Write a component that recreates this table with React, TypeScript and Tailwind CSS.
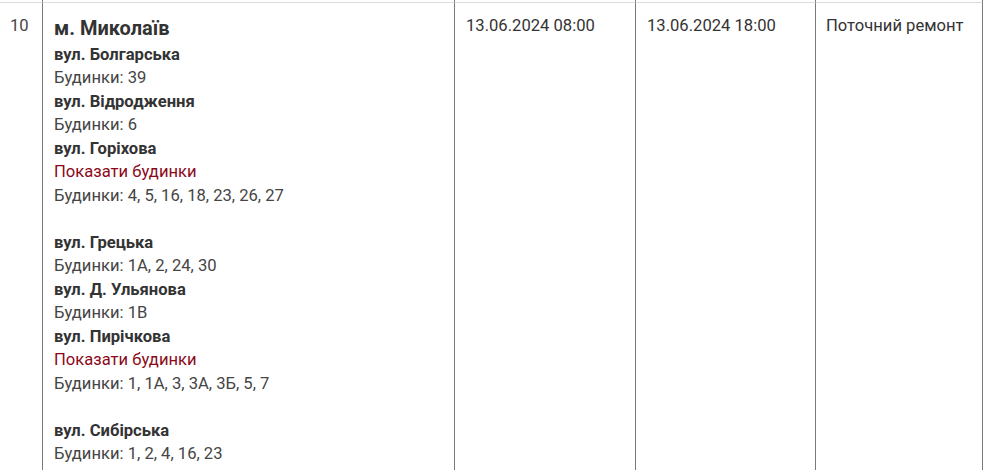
const streets = [
  { name: 'вул. Болгарська', houses: '39' },
  { name: 'вул. Відродження', houses: '6' },
  { name: 'вул. Горіхова', houses: '4, 5, 16, 18, 23, 26, 27', toggle: true },
  { name: 'вул. Грецька', houses: '1А, 2, 24, 30' },
  { name: 'вул. Д. Ульянова', houses: '1В' },
  { name: 'вул. Пирічкова', houses: '1, 1А, 3, 3А, 3Б, 5, 7', toggle: true },
  { name: 'вул. Сибірська', houses: '1, 2, 4, 16, 23' },
];

const cell = 'border-r border-[#7a7a7a] border-t border-t-[#dcdcdc] px-[11px] pt-[11px]';

export default function App() {
  return (
    <div className="min-h-screen bg-white font-['Roboto','Liberation_Sans',sans-serif] text-[16.6px] leading-[23.5px] text-[#454545]">
      <div className="grid grid-cols-[43px_412px_181px_180px_167px]">
        <div className="h-[2px] border-r border-[#7a7a7a]" />
        <div className="h-[2px] border-r border-[#7a7a7a]" />
        <div className="h-[2px] border-r border-[#7a7a7a]" />
        <div className="h-[2px] border-r border-[#7a7a7a]" />
        <div className="h-[2px] border-r border-[#7a7a7a]" />

        <div className={`${cell} pl-[10px]`}>10</div>
        <div className={`${cell} pl-[11px] pb-2`}>
          <div className="text-[20px] leading-[28.5px] font-bold text-[#333]">м. Миколаїв</div>
          {streets.map((s) => (
            <div key={s.name}>
              <div className="font-bold text-[#333]">{s.name}</div>
              {s.toggle && <div className="text-[#8b0a1a]">Показати будинки</div>}
              <div>Будинки: {s.houses}</div>
              {s.toggle && <div className="h-[23.5px]" />}
            </div>
          ))}
        </div>
        <div className={`${cell} text-[#333]`}>13.06.2024 08:00</div>
        <div className={`${cell} text-[#333]`}>13.06.2024 18:00</div>
        <div className={`${cell} pl-[10px] text-[#333]`}>Поточний ремонт</div>
      </div>
    </div>
  );
}
